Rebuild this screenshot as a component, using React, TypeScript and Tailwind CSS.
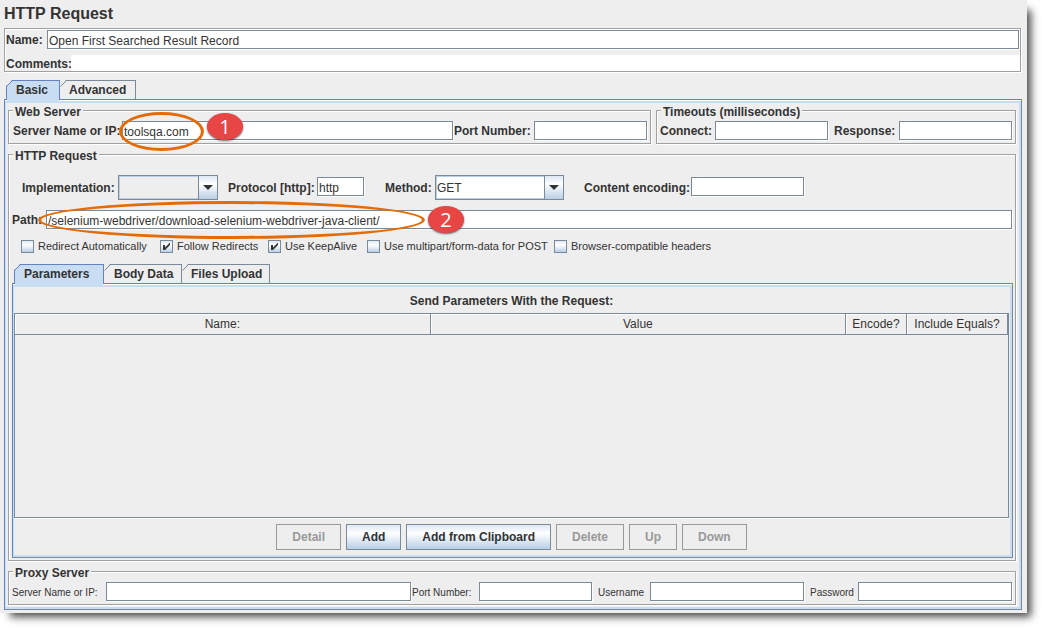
import type React from "react"
import clsx from "clsx"

const etched = "border border-[#a0a0a0] shadow-[1px_1px_0_#fff,inset_1px_1px_0_#fff]"
const metal = "bg-[linear-gradient(#dde8f3,#ffffff_35%,#b8cfe5)]"

interface GroupProps {
  title: string
  className?: string
  children: React.ReactNode
}

function Group({ title, className, children }: GroupProps) {
  return (
    <fieldset className={clsx("min-w-0 pl-[3px]", etched, className)}>
      <legend className="ml-px h-[15px] bg-[#eeeeee] px-[2px] leading-[18px] font-bold">{title}</legend>
      {children}
    </fieldset>
  )
}

interface CaptionProps extends React.LabelHTMLAttributes<HTMLLabelElement> {
  small?: boolean
}

function Caption({ small, className, ...props }: CaptionProps) {
  return (
    <label
      className={clsx("shrink-0 pt-[2px] whitespace-nowrap", small ? "text-[10px]" : "font-bold", className)}
      {...props}
    />
  )
}

function Field({ className, ...props }: React.InputHTMLAttributes<HTMLInputElement>) {
  return (
    <input
      type="text"
      className={clsx(
        "h-[19px] min-w-0 rounded-none border border-[#7a8a99] bg-white px-px pt-[2px] shadow-[1px_1px_0_#fff] outline-none",
        className,
      )}
      {...props}
    />
  )
}

interface ComboProps {
  id: string
  options: string[]
  className?: string
}

function Combo({ id, options, className }: ComboProps) {
  return (
    <div className={clsx("relative h-[25px] shrink-0", className)}>
      <select
        id={id}
        className="block h-full w-full appearance-none rounded-none border border-[#7a8a99] bg-transparent pt-px pl-px shadow-[inset_1px_1px_0_#b8cfe5,inset_-1px_-1px_0_#b8cfe5] outline-none"
      >
        {options.map((option) => (
          <option key={option}>{option}</option>
        ))}
      </select>
      <span
        className={clsx(
          "pointer-events-none absolute inset-y-0 right-0 flex w-5 items-center justify-center border border-[#7a8a99]",
          metal,
        )}
      >
        <svg width="10" height="5" viewBox="0 0 10 5">
          <path d="M0 0h10L5 5z" fill="#333" />
        </svg>
      </span>
    </div>
  )
}

interface CheckProps {
  label: string
  checked?: boolean
  className?: string
}

function Check({ label, checked, className }: CheckProps) {
  return (
    <label className={clsx("flex shrink-0 items-center gap-1", className)}>
      <span className="relative size-[13px]">
        <input
          type="checkbox"
          defaultChecked={checked}
          className={clsx("peer block size-[13px] appearance-none border border-[#7a8a99]", metal)}
        />
        <svg
          className="pointer-events-none absolute inset-0 hidden peer-checked:block"
          width="13"
          height="13"
          viewBox="0 0 13 13"
        >
          <path d="M3 5h2v2.6L10 2.5v2.5L5 10H3z" fill="#333" />
        </svg>
      </span>
      {label}
    </label>
  )
}

interface TabProps {
  label: string
  selected?: boolean
  className?: string
}

function Tab({ label, selected, className }: TabProps) {
  return (
    <button
      type="button"
      role="tab"
      aria-selected={selected}
      className={clsx(
        "relative h-[19px] border-t border-r text-left font-bold",
        selected
          ? "z-10 border-l border-[#6382bf] bg-[#c8ddf2] pl-[9px] after:absolute after:inset-x-0 after:top-full after:h-[3px] after:bg-[#c8ddf2]"
          : "border-[#7a8a99]",
        className,
      )}
    >
      <svg className={clsx("absolute -top-px", selected ? "-left-px" : "left-0")} width="7" height="7" viewBox="0 0 7 7">
        <path d="M0 0h6L0 6z" fill="#eee" />
        <path d="M0.5 6.5l6-6" stroke={selected ? "#6382bf" : "#7a8a99"} fill="none" />
      </svg>
      {label}
    </button>
  )
}

interface TabPanelProps {
  className?: string
  children: React.ReactNode
}

// light blue inner band is 2px on every side but the left
function TabPanel({ className, children }: TabPanelProps) {
  return (
    <div className="border border-[#7a8a99] border-t-[#6382bf] border-l-[#6382bf] bg-white pt-px">
      <div className={clsx("border-2 border-l border-[#c8ddf2] bg-[#eeeeee]", className)}>{children}</div>
    </div>
  )
}

function ActionButton({ label, disabled }: { label: string; disabled?: boolean }) {
  return (
    <button
      type="button"
      disabled={disabled}
      className={clsx(
        "h-[26px] border px-[15px] pt-px font-bold",
        disabled ? "border-[#999999] text-[#999999]" : ["border-[#7a8a99]", metal],
      )}
    >
      {label}
    </button>
  )
}

interface MarkerProps {
  step: number
  className?: string
}

function Marker({ step, className }: MarkerProps) {
  return (
    <span
      className={clsx(
        "absolute z-20 flex h-[27px] w-9 items-center justify-center rounded-[50%] bg-[#e84545] font-['Open_Sans',sans-serif] text-[20px] text-white shadow-[0_1px_2px_rgba(0,0,0,0.6)]",
        className,
      )}
    >
      {step}
    </span>
  )
}

const ring = "pointer-events-none absolute z-20 rounded-[50%] border-3 border-[#e36c09]"
const headCell = "h-5 border-r border-b border-[#7a8a99] pt-[2px] font-normal shadow-[inset_1px_1px_0_#fff]"

export default function App() {
  return (
    <div className="bg-white pr-[15px] pb-[15px] font-['Liberation_Sans',Arial,sans-serif] text-[12px] leading-[15px] text-[#333333]">
      <main className="bg-[#eeeeee] pr-[5px] pb-[3px] pl-1 shadow-[7px_7px_8px_-3px_rgba(0,0,0,0.7)]">
        <h1 className="flex h-7 items-center pb-[2px] text-[16px] font-bold">HTTP Request</h1>

        <div className={clsx("mr-px pt-px pl-px", etched)}>
          <div className="flex items-center pr-px">
            <Caption htmlFor="name" className="w-[41px]">
              Name:
            </Caption>
            <Field id="name" defaultValue="Open First Searched Result Record" className="flex-1" />
          </div>
          <div className="mt-[6px] flex h-4 items-center">
            <Caption htmlFor="comments" className="w-[65px]">
              Comments:
            </Caption>
            <input id="comments" type="text" className="h-4 min-w-0 flex-1 bg-white outline-none" />
          </div>
        </div>

        <div role="tablist" className="mt-2 flex h-[19px] pl-[2px]">
          <Tab label="Basic" selected className="w-[54px]" />
          <Tab label="Advanced" className="w-[76px] pl-[9px]" />
        </div>

        <TabPanel className="flex flex-col gap-[3px] pr-[3px] pb-[2px] pl-[2px]">
          <div className="flex gap-[5px]">
            <Group title="Web Server" className="flex-1 pr-[3px] pb-[3px]">
              <div className="relative flex items-center pt-[3px] pl-px">
                <Caption htmlFor="server" className="w-[109px]">
                  Server Name or IP:
                </Caption>
                <Field id="server" defaultValue="toolsqa.com" className="flex-1" />
                <Caption htmlFor="port" className="w-[81px] pl-px">
                  Port Number:
                </Caption>
                <Field id="port" className="w-[113px]" />
                <span className={clsx(ring, "-top-[6px] left-[107px] h-[39px] w-[85px]")} />
                <Marker step={1} className="-top-[5px] left-[195px]" />
              </div>
            </Group>
            <Group title="Timeouts (milliseconds)" className="pr-[3px] pb-[3px]">
              <div className="flex items-center pt-[3px]">
                <Caption htmlFor="connect" className="w-[55px]">
                  Connect:
                </Caption>
                <Field id="connect" className="w-[113px]" />
                <Caption htmlFor="response" className="w-[71px] pl-[6px]">
                  Response:
                </Caption>
                <Field id="response" className="w-[113px]" />
              </div>
            </Group>
          </div>

          <Group title="HTTP Request" className="pr-[2px] pb-[2px]">
            <div className="mt-[13px] flex items-center pl-[10px]">
              <Caption htmlFor="implementation" className="w-24">
                Implementation:
              </Caption>
              <Combo id="implementation" options={["", "HttpClient4", "Java"]} className="w-[100px]" />
              <Caption htmlFor="protocol" className="ml-[10px] w-[89px]">
                Protocol [http]:
              </Caption>
              <Field id="protocol" defaultValue="http" className="mb-[2px] w-[47px]" />
              <Caption htmlFor="method" className="ml-[21px] w-[50px]">
                Method:
              </Caption>
              <Combo id="method" options={["GET", "POST", "PUT", "DELETE"]} className="w-[129px] bg-white" />
              <Caption htmlFor="encoding" className="ml-5 w-[107px]">
                Content encoding:
              </Caption>
              <Field id="encoding" className="mb-[2px] w-[113px]" />
            </div>

            <div className="relative mt-[10px] flex items-center pr-px">
              <Caption htmlFor="path" className="w-[34px]">
                Path:
              </Caption>
              <Field
                id="path"
                defaultValue="/selenium-webdriver/download-selenium-webdriver-java-client/"
                className="flex-1"
              />
              <span className={clsx(ring, "-top-[9px] left-[26px] h-[38px] w-[387px]")} />
              <Marker step={2} className="-top-[4px] left-[416px]" />
            </div>

            <div className="mt-[11px] flex h-[13px] items-center pl-[9px] text-[11px]">
              <Check label="Redirect Automatically" className="w-[139px]" />
              <Check label="Follow Redirects" checked className="w-[108px]" />
              <Check label="Use KeepAlive" checked className="w-[99px]" />
              <Check label="Use multipart/form-data for POST" className="w-[187px]" />
              <Check label="Browser-compatible headers" />
            </div>

            <div role="tablist" className="mt-[11px] flex h-[19px] pl-[2px]">
              <Tab label="Parameters" selected className="w-[90px]" />
              <Tab label="Body Data" className="w-[78px] pl-[10px]" />
              <Tab label="Files Upload" className="w-[88px] pl-[9px]" />
            </div>

            <TabPanel className="pr-px pb-[5px]">
              <h2 className="flex h-[26px] items-center justify-center pt-[2px] font-bold">
                Send Parameters With the Request:
              </h2>
              <div className="min-h-[205px] border border-[#7a8a99] shadow-[0_1px_0_#fff]">
                <table className="w-full table-fixed border-collapse">
                  <thead>
                    <tr>
                      <th className={headCell}>Name:</th>
                      <th className={headCell}>Value</th>
                      <th className={clsx(headCell, "w-[61px]")}>Encode?</th>
                      <th className={clsx(headCell, "w-[101px]")}>Include Equals?</th>
                    </tr>
                  </thead>
                  <tbody />
                </table>
              </div>
              <div className="mt-[6px] flex justify-center gap-[5px]">
                <ActionButton label="Detail" disabled />
                <ActionButton label="Add" />
                <ActionButton label="Add from Clipboard" />
                <ActionButton label="Delete" disabled />
                <ActionButton label="Up" disabled />
                <ActionButton label="Down" disabled />
              </div>
            </TabPanel>
          </Group>

          <Group title="Proxy Server" className="pr-[3px] pb-[3px]">
            <div className="flex items-center pt-[3px]">
              <Caption small htmlFor="proxy-server" className="w-[94px]">
                Server Name or IP:
              </Caption>
              <Field id="proxy-server" className="flex-1" />
              <Caption small htmlFor="proxy-port" className="w-[68px] pl-px">
                Port Number:
              </Caption>
              <Field id="proxy-port" className="w-[113px]" />
              <Caption small htmlFor="username" className="w-[58px] pl-[6px]">
                Username
              </Caption>
              <Field id="username" className="w-[154px]" />
              <Caption small htmlFor="password" className="w-[54px] pl-[6px]">
                Password
              </Caption>
              <Field id="password" type="password" className="w-[154px]" />
            </div>
          </Group>
        </TabPanel>
      </main>
    </div>
  )
}
